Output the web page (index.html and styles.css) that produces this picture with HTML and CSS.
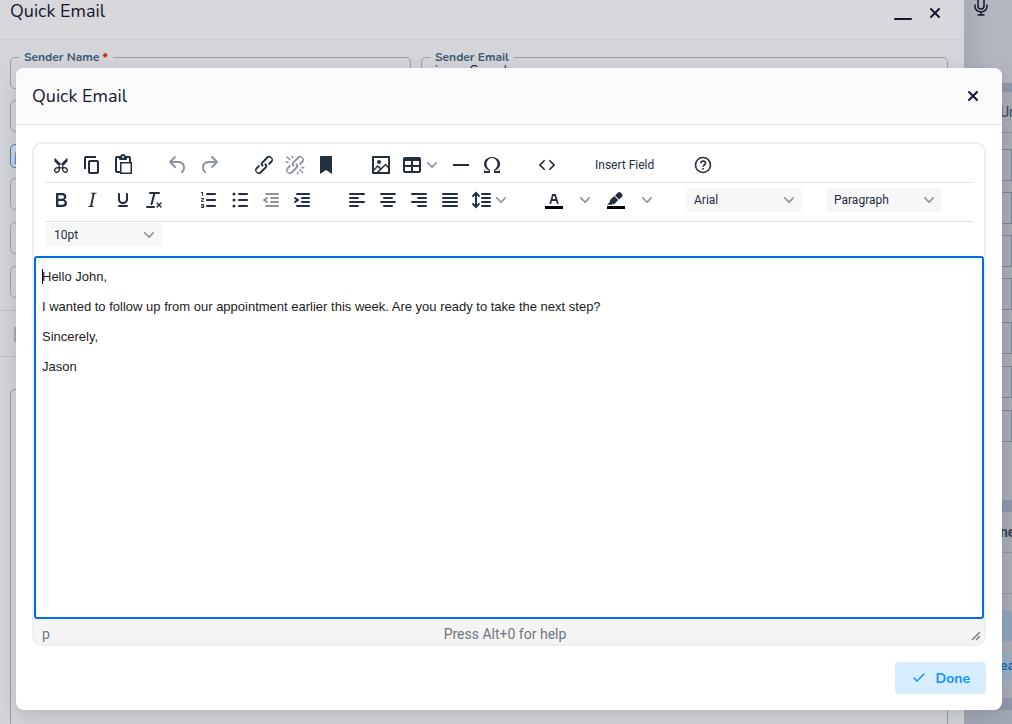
FILE: index.html
```html
<!DOCTYPE html>
<html lang="en">
<head>
  <meta charset="UTF-8" />
  <meta name="viewport" content="width=device-width, initial-scale=1.0" />
  <title>Quick Email</title>
  <link rel="stylesheet" href="styles.css">
</head>
<body>
  <!-- Page behind the dialog -->
  <div class="app">
    <main class="panel">
      <header class="panel-header">
        <h1 class="title">Quick Email</h1>
        <div class="window-actions">
          <button class="icon-btn" aria-label="Minimize"><svg width="18" height="18" viewBox="0 0 18 18"><path d="M1 15h16" fill="none" stroke="currentColor" stroke-width="2" stroke-linecap="round"/></svg></button>
          <button class="icon-btn" aria-label="Close panel"><svg width="12" height="12" viewBox="0 0 12 12"><path d="m2 2 8 8M10 2l-8 8" fill="none" stroke="currentColor" stroke-width="2" stroke-linecap="round"/></svg></button>
        </div>
      </header>
      <div class="sender-row">
        <fieldset class="field sender-name">
          <legend><label for="senderName">Sender Name <b class="required">*</b></label></legend>
          <input id="senderName" type="text">
        </fieldset>
        <fieldset class="field sender-email">
          <legend><label for="senderEmail">Sender Email</label></legend>
          <input id="senderEmail" type="text" value="jason Cornel">
        </fieldset>
      </div>
      <div class="panel-fields">
        <input class="line-field" type="text" aria-label="Recipient">
        <input class="line-field chip" type="text" aria-label="To" value="j">
        <input class="line-field" type="text" aria-label="Cc">
        <input class="line-field" type="text" aria-label="Bcc">
        <input class="line-field" type="text" aria-label="Subject">
      </div>
      <div class="panel-tools"><span class="tool-block"></span></div>
      <textarea class="message-box" aria-label="Message"></textarea>
    </main>
    <aside class="side">
      <div class="side-top">
        <svg width="16" height="20" viewBox="0 0 16 20"><g fill="none" stroke="currentColor" stroke-width="1.5" stroke-linecap="round"><rect x="5" y="-4" width="6" height="13" rx="3"/><path d="M2 5v1.5a6 5.5 0 0 0 12 0V5M8 12v3M5 15h6"/></g></svg>
      </div>
      <div class="side-card">
        <div class="side-heading">Un</div>
        <div class="side-list">
          <span class="side-slot"></span>
          <span class="side-slot"></span>
          <span class="side-slot"></span>
          <span class="side-slot"></span>
          <span class="side-slot"></span>
          <span class="side-slot"></span>
          <span class="side-slot"></span>
        </div>
      </div>
      <div class="side-card side-card-small">
        <div class="side-heading side-heading-bold">ne</div>
        <div class="side-gap"></div>
        <div class="side-action"></div>
        <div class="side-action side-action-light">ea</div>
      </div>
      <div class="side-foot"></div>
    </aside>
  </div>

  <section class="modal" role="dialog" aria-labelledby="modalTitle">
    <header class="modal-header">
      <h2 class="title" id="modalTitle">Quick Email</h2>
      <button class="icon-btn" aria-label="Close"><svg width="12" height="12" viewBox="0 0 12 12"><path d="m2 2 8 8M10 2l-8 8" fill="none" stroke="currentColor" stroke-width="2" stroke-linecap="round"/></svg></button>
    </header>

    <div class="modal-body">
      <div class="editor">
        <div class="toolbar" role="toolbar">
          <div class="toolbar-row">
            <div class="group">
              <button class="tool" aria-label="Cut"><svg class="icon"><path fill-rule="evenodd" d="M18 15c.6.7 1 1.4 1 2.3 0 .8-.2 1.500-.7 2l-.8.5-1 .2c-.4 0-.8 0-1.2-.3a3.9 3.9 0 0 1-2.1-2.2c-.2-.5-.3-1-.2-1.5l-1-1-1 1c0 .5 0 1-.2 1.5-.1.5-.4 1-.9 1.4-.3.4-.7.6-1.2.8l-1.2.3c-.4 0-.7 0-1-.2-.3 0-.6-.3-.8-.5-.5-.5-.8-1.2-.7-2 0-.9.4-1.6 1-2.2A3.7 3.7 0 0 1 8.6 14H9l1-1-4-4-.5-1a3.3 3.3 0 0 1 0-2c0-.4.3-.7.5-1l6 6 6-6 .5 1a3.3 3.3 0 0 1 0 2c0 .4-.3.7-.5 1l-4 4 1 1h.5c.4 0 .8 0 1.2.3.5.2.9.4 1.2.8Zm-8.5 2.2.1-.4v-.7a1 1 0 0 0-.2-.5 1 1 0 0 0-.4-.2 1.6 1.6 0 0 0-.8 0 2.6 2.6 0 0 0-.8.3 2.5 2.5 0 0 0-.9 1.1l-.1.4v.7l.2.5.5.2h.7a2.5 2.5 0 0 0 .8-.3 2.8 2.8 0 0 0 .9-1.1Zm2.5-2.8c.4 0 .7-.1 1-.4.3-.3.4-.6.4-1s-.1-.7-.4-1c-.3-.3-.6-.4-1-.4s-.7.1-1 .4c-.3.3-.4.6-.4 1s.1.7.4 1c.3.3.6.4 1 .4Zm5.4 4 .2-.5v-.7a2.6 2.6 0 0 0-.3-.8 2.4 2.4 0 0 0-.7-.7 2.5 2.5 0 0 0-.8-.3 1.5 1.5 0 0 0-.8 0 1 1 0 0 0-.4.2 1 1 0 0 0-.2.5v1.1l.3.4.3.4a2.8 2.8 0 0 0 .8.5l.4.1h.7l.5-.2Z"/></svg></button>
              <button class="tool" aria-label="Copy"><svg class="icon"><path d="M16 3H6a2 2 0 0 0-2 2v11h2V5h10V3Zm1 4a2 2 0 0 1 2 2v10a2 2 0 0 1-2 2h-7a2 2 0 0 1-2-2V9c0-1.2.9-2 2-2h7Zm0 12V9h-7v10h7Z"/></svg></button>
              <button class="tool" aria-label="Paste"><svg class="icon"><path fill-rule="evenodd" d="M18 9V5h-2v1c0 .6-.4 1-1 1H9a1 1 0 0 1-1-1V5H6v13h3v2H6a2 2 0 0 1-2-2V5c0-1.1.9-2 2-2h3.2A3 3 0 0 1 12 1a3 3 0 0 1 2.800 2H18a2 2 0 0 1 2 2v4h1v12H9V9h9Zm1.500 1.500h-9v9h9v-9ZM12 3a1 1 0 1 0 0 2 1 1 0 0 0 0-2Z"/></svg></button>
            </div>
            <div class="group">
              <button class="tool" disabled aria-label="Undo"><svg class="icon"><path d="M6.4 8H12c3.7 0 6.2 2 6.8 5.1.6 2.7-.4 5.6-2.3 6.8a1 1 0 0 1-1-1.800c1.1-.6 1.8-2.7 1.4-4.6-.5-2.1-2.1-3.5-4.9-3.5H6.400l3.300 3.300a1 1 0 1 1-1.4 1.4l-5-5a1 1 0 0 1 0-1.4l5-5a1 1 0 0 1 1.4 1.4L6.400 8Z"/></svg></button>
              <button class="tool" disabled aria-label="Redo"><svg class="icon"><path d="M17.6 10H12c-2.8 0-4.4 1.4-4.9 3.5-.4 2 .3 4 1.4 4.6a1 1 0 1 1-1 1.8c-2-1.2-2.9-4.1-2.3-6.8.6-3 3-5.1 6.8-5.1h5.6l-3.3-3.3a1 1 0 1 1 1.4-1.4l5 5a1 1 0 0 1 0 1.4l-5 5a1 1 0 0 1-1.4-1.4l3.3-3.3Z"/></svg></button>
            </div>
            <div class="group">
              <button class="tool" aria-label="Link"><svg class="icon"><path d="M6.2 12.3a1 1 0 0 1 1.4 1.4l-2 2a2 2 0 1 0 2.6 2.8l4.8-4.8a1 1 0 0 0 0-1.4 1 1 0 1 1 1.4-1.3 2.9 2.9 0 0 1 0 4L9.6 20a3.9 3.9 0 0 1-5.5-5.5l2-2Zm11.6-.6a1 1 0 0 1-1.4-1.4l2-2a2 2 0 1 0-2.6-2.8L11 10.3a1 1 0 0 0 0 1.4A1 1 0 1 1 9.6 13a2.9 2.9 0 0 1 0-4L14.4 4a3.9 3.9 0 0 1 5.5 5.5l-2 2Z"/></svg></button>
              <button class="tool" disabled aria-label="Remove link"><svg class="icon"><path d="M6.2 12.3a1 1 0 0 1 1.4 1.4l-2 2a2 2 0 1 0 2.6 2.8l4.8-4.8a1 1 0 0 0 0-1.4 1 1 0 1 1 1.4-1.3 2.9 2.9 0 0 1 0 4L9.6 20a3.9 3.9 0 0 1-5.5-5.5l2-2Zm11.6-.6a1 1 0 0 1-1.4-1.4l2-2a2 2 0 1 0-2.6-2.8L11 10.3a1 1 0 0 0 0 1.4A1 1 0 1 1 9.6 13a2.9 2.9 0 0 1 0-4L14.4 4a3.9 3.9 0 0 1 5.5 5.5l-2 2ZM7.6 6.3a.8.8 0 0 1-1 1.1L3.3 4.2a.7.7 0 1 1 1-1l3.2 3.1ZM5.1 8.6a.8.8 0 0 1 0 1.5H3a.8.8 0 0 1 0-1.5h2Zm5-3.5a.8.8 0 0 1-1.5 0V3a.8.8 0 0 1 1.5 0v2Zm6 11.800a.8.8 0 0 1 1-1l3.2 3.2a.8.8 0 0 1-1 1L16 17Zm-2.200 2a.8.8 0 0 1 1.5 0V21a.8.8 0 0 1-1.5 0v-2Zm5-3.5a.7.7 0 1 1 0-1.5H21a.8.8 0 0 1 0 1.5h-2Z"/></svg></button>
              <button class="tool" aria-label="Anchor"><svg class="icon"><path d="M6 4v17l6-4 6 4V4c0-.6-.4-1-1-1H7a1 1 0 0 0-1 1Z"/></svg></button>
            </div>
            <div class="group">
              <button class="tool" aria-label="Image"><svg class="icon"><path fill-rule="evenodd" d="m5 15.7 3.3-3.2c.3-.3.7-.3 1 0L12 15l4.1-4c.3-.4.8-.4 1 0l2 1.9V5H5v10.7ZM5 18v1h3l2.800-2.900-2-2L5 17.900Zm14-3-2.500-2.400-6.400 6.500H19v-4ZM4 3h16c.6 0 1 .4 1 1v16c0 .6-.4 1-1 1H4a1 1 0 0 1-1-1V4c0-.6.4-1 1-1Zm6 8a2 2 0 1 0 0-4 2 2 0 0 0 0 4Z"/></svg></button>
              <button class="tool tool-menu" aria-label="Table"><svg class="icon"><path fill-rule="evenodd" d="M19 4a2 2 0 0 1 2 2v12a2 2 0 0 1-2 2H5a2 2 0 0 1-2-2V6c0-1.1.9-2 2-2h14ZM5 14v4h6v-4H5Zm14 0h-6v4h6v-4Zm0-6h-6v4h6V8ZM5 12h6V8H5v4Z"/></svg><svg class="chevron"><path d="M8.7 2.2c.3-.3.8-.3 1 0 .4.4.4.9 0 1.2L5.7 7.8c-.3.3-.9.3-1.2 0L.2 3.4a.8.8 0 0 1 0-1.2c.3-.3.8-.3 1.1 0L5 6l3.700-3.800Z"/></svg></button>
              <button class="tool" aria-label="Horizontal line"><svg class="icon"><path d="M4 11h16v2H4z"/></svg></button>
              <button class="tool" aria-label="Special character"><svg class="icon"><path d="M15 18h4l1-2v4h-6v-3.3l1.4-1a6 6 0 0 0 1.8-2.9 6.3 6.3 0 0 0-.1-4.1 5.8 5.8 0 0 0-3-3.2c-.6-.3-1.3-.5-2.1-.5a5.1 5.1 0 0 0-3.9 1.8 6.3 6.3 0 0 0-1.3 6 6.2 6.2 0 0 0 1.8 3l1.4.9V20H4v-4l1 2h4v-.5l-2-1L5.4 15A6.5 6.5 0 0 1 4 11c0-1 .2-1.9.6-2.7A7 7 0 0 1 6.3 6C7.1 5.4 8 5 9 4.5c1-.3 2-.5 3.1-.5a8.8 8.8 0 0 1 5.7 2 7 7 0 0 1 1.700 2.300 6 6 0 0 1 .2 4.800c-.2.7-.6 1.300-1 1.900a7.600 7.600 0 0 1-3.600 2.500v1.500Z"/></svg></button>
            </div>
            <div class="group">
              <button class="tool" aria-label="Source code"><svg class="icon"><path d="M9.8 15.7c.3.3.3.8 0 1-.3.4-.9.4-1.2 0l-4.4-4.1a.8.8 0 0 1 0-1.2l4.4-4.2c.3-.3.9-.3 1.2 0 .3.3.3.8 0 1.1L6 12l3.8 3.7ZM14.2 15.7c-.3.3-.3.8 0 1 .4.4.9.4 1.2 0l4.4-4.1c.3-.3.3-.9 0-1.2l-4.4-4.2a.8.8 0 0 0-1.2 0c-.3.3-.3.8 0 1.1L18 12l-3.8 3.7Z"/></svg></button>
            </div>
            <div class="group">
              <button class="tool tool-text">Insert Field</button>
            </div>
            <div class="group">
              <button class="tool" aria-label="Help"><svg class="icon"><g fill="none" stroke="currentColor" stroke-width="1.6"><circle cx="12" cy="12" r="7.5"/><path d="M9.7 10.2c0-2.9 4.8-2.7 4.8 0 0 1.7-2.4 1.7-2.4 3.6"/></g><path d="M11.2 15h1.7v1.6h-1.7z"/></svg></button>
            </div>
          </div>

          <div class="toolbar-row toolbar-row-format">
            <div class="group">
              <button class="tool" aria-label="Bold"><svg class="icon"><path fill-rule="evenodd" d="M7.8 19c-.3 0-.5 0-.6-.2l-.2-.5V5.7c0-.2 0-.4.2-.5l.6-.2h5c1.5 0 2.7.3 3.5 1 .7.6 1.1 1.4 1.1 2.5a3 3 0 0 1-.6 1.9c-.4.6-1 1-1.6 1.2.4.1.9.3 1.3.6s.8.7 1 1.2c.4.4.5 1 .5 1.6 0 1.3-.4 2.3-1.3 3-.8.7-2.1 1-3.8 1H7.8Zm5-8.3c.6 0 1.2-.1 1.6-.5.4-.3.6-.7.6-1.3 0-1.1-.8-1.7-2.3-1.7H9.3v3.5h3.4Zm.5 6c.7 0 1.3-.1 1.7-.4.4-.4.6-.9.6-1.5s-.2-1-.7-1.4c-.4-.3-1-.4-2-.4H9.4v3.8h4Z"/></svg></button>
              <button class="tool" aria-label="Italic"><svg class="icon"><path d="m16.7 4.7-.1.9h-.3c-.6 0-1 0-1.4.3-.3.3-.4.6-.5 1.1l-2.1 9.8v.6c0 .5.4.8 1.4.8h.2l-.2.8H8l.2-.8h.2c1.1 0 1.8-.5 2-1.5l2-9.8.1-.5c0-.6-.4-.8-1.4-.8h-.3l.2-.9h5.8Z"/></svg></button>
              <button class="tool" aria-label="Underline"><svg class="icon"><path d="M16 5c.6 0 1 .4 1 1v5.5a4 4 0 0 1-.4 1.8l-1 1.4a5.3 5.3 0 0 1-5.5 1 5 5 0 0 1-1.6-1c-.5-.4-.8-.9-1.1-1.4a4 4 0 0 1-.4-1.800V6c0-.6.4-1 1-1s1 .4 1 1v5.5c0 .3 0 .6.2 1l.6.7a3.3 3.3 0 0 0 2.2.8 3.4 3.4 0 0 0 2.2-.8c.3-.2.4-.5.6-.8l.2-.9V6c0-.6.4-1 1-1ZM8 17h8c.6 0 1 .4 1 1s-.4 1-1 1H8a1 1 0 0 1 0-2Z"/></svg></button>
              <button class="tool" aria-label="Clear formatting"><svg class="icon"><path d="M13.2 6v.2l-2.6 10a1 1 0 0 1-1 .8h-.2a.8.8 0 0 1-.8-1l2.6-10H8a1 1 0 1 1 0-2h9a1 1 0 0 1 0 2h-3.8ZM5 18h7a1 1 0 0 1 0 2H5a1 1 0 0 1 0-2Zm13.5 1.5L17 18l-1.5 1.5a.7.7 0 0 1-1-1L16 17l-1.5-1.5a.7.7 0 0 1 1-1L17 16l1.5-1.5a.7.7 0 0 1 1 1L18 17l1.500 1.500a.7.7 0 0 1-1 1Z"/></svg></button>
            </div>
            <div class="group">
              <button class="tool" aria-label="Numbered list"><svg class="icon"><path d="M10 17h8c.6 0 1 .4 1 1s-.4 1-1 1h-8a1 1 0 0 1 0-2Zm0-6h8c.6 0 1 .4 1 1s-.4 1-1 1h-8a1 1 0 0 1 0-2Zm0-6h8c.6 0 1 .4 1 1s-.4 1-1 1h-8a1 1 0 1 1 0-2ZM6 4v3.5c0 .3-.2.5-.5.5a.5.5 0 0 1-.5-.5V5h-.5a.5.5 0 0 1 0-1H6Zm-1 8.800.2.2h1.300c.3 0 .5.2.5.5s-.2.5-.5.5H4.900a1 1 0 0 1-.9-1c0-.4.3-.8.6-1l1.200-.4.2-.3a.2.2 0 0 0-.2-.2H4.500a.5.5 0 0 1-.5-.5c0-.3.2-.5.5-.5h1.600c.5 0 .9.4.9 1 0 .4-.3.8-.6 1l-1.200.4-.2.3ZM7 17v2c0 .6-.4 1-1 1H4.500a.5.5 0 0 1 0-1h1.200c.2 0 .3-.1.3-.3 0-.2-.1-.3-.3-.3H4.400a.4.4 0 1 1 0-.8h1.300c.2 0 .3-.1.3-.3 0-.2-.1-.3-.3-.3H4.500a.5.5 0 1 1 0-1H6c.6 0 1 .4 1 1Z"/></svg></button>
              <button class="tool" aria-label="Bullet list"><svg class="icon"><path d="M11 5h8c.6 0 1 .4 1 1s-.4 1-1 1h-8a1 1 0 0 1 0-2Zm0 6h8c.6 0 1 .4 1 1s-.4 1-1 1h-8a1 1 0 0 1 0-2Zm0 6h8c.6 0 1 .4 1 1s-.4 1-1 1h-8a1 1 0 0 1 0-2ZM4.5 6a1.5 1.5 0 1 0 3 0 1.5 1.5 0 0 0-3 0Zm0 6a1.5 1.5 0 1 0 3 0 1.5 1.5 0 0 0-3 0Zm0 6a1.5 1.5 0 1 0 3 0 1.5 1.5 0 0 0-3 0Z"/></svg></button>
              <button class="tool" disabled aria-label="Decrease indent"><svg class="icon"><path d="M7 5h12c.6 0 1 .4 1 1s-.4 1-1 1H7a1 1 0 1 1 0-2Zm5 4h7c.6 0 1 .4 1 1s-.4 1-1 1h-7a1 1 0 0 1 0-2Zm0 4h7c.6 0 1 .4 1 1s-.4 1-1 1h-7a1 1 0 0 1 0-2Zm-5 4h12a1 1 0 0 1 0 2H7a1 1 0 0 1 0-2Zm1.6-3.8a1 1 0 0 1-1.2 1.6l-3-2a1 1 0 0 1 0-1.6l3-2a1 1 0 0 1 1.2 1.6L6.8 12l1.8 1.2Z"/></svg></button>
              <button class="tool" aria-label="Increase indent"><svg class="icon"><path d="M7 5h12c.6 0 1 .4 1 1s-.4 1-1 1H7a1 1 0 1 1 0-2Zm5 4h7c.6 0 1 .4 1 1s-.4 1-1 1h-7a1 1 0 0 1 0-2Zm0 4h7c.6 0 1 .4 1 1s-.4 1-1 1h-7a1 1 0 0 1 0-2Zm-5 4h12a1 1 0 0 1 0 2H7a1 1 0 0 1 0-2Zm-2.6-3.8L6.2 12l-1.8-1.2a1 1 0 0 1 1.2-1.6l3 2a1 1 0 0 1 0 1.6l-3 2a1 1 0 1 1-1.2-1.6Z"/></svg></button>
            </div>
            <div class="group">
              <button class="tool" aria-label="Align left"><svg class="icon"><path d="M5 5h14a1 1 0 0 1 0 2H5a1 1 0 1 1 0-2Zm0 4h8a1 1 0 0 1 0 2H5a1 1 0 1 1 0-2Zm0 8h8a1 1 0 0 1 0 2H5a1 1 0 0 1 0-2Zm0-4h14a1 1 0 0 1 0 2H5a1 1 0 0 1 0-2Z"/></svg></button>
              <button class="tool" aria-label="Align center"><svg class="icon"><path d="M5 5h14a1 1 0 0 1 0 2H5a1 1 0 1 1 0-2Zm3 4h8a1 1 0 0 1 0 2H8a1 1 0 1 1 0-2Zm0 8h8a1 1 0 0 1 0 2H8a1 1 0 0 1 0-2Zm-3-4h14a1 1 0 0 1 0 2H5a1 1 0 0 1 0-2Z"/></svg></button>
              <button class="tool" aria-label="Align right"><svg class="icon"><path d="M5 5h14a1 1 0 0 1 0 2H5a1 1 0 1 1 0-2Zm6 4h8a1 1 0 0 1 0 2h-8a1 1 0 0 1 0-2Zm0 8h8a1 1 0 0 1 0 2h-8a1 1 0 0 1 0-2Zm-6-4h14a1 1 0 0 1 0 2H5a1 1 0 0 1 0-2Z"/></svg></button>
              <button class="tool" aria-label="Justify"><svg class="icon"><path d="M5 5h14a1 1 0 0 1 0 2H5a1 1 0 1 1 0-2Zm0 4h14a1 1 0 0 1 0 2H5a1 1 0 1 1 0-2Zm0 4h14a1 1 0 0 1 0 2H5a1 1 0 0 1 0-2Zm0 4h14a1 1 0 0 1 0 2H5a1 1 0 0 1 0-2Z"/></svg></button>
              <button class="tool tool-menu" aria-label="Line height"><svg class="icon"><path d="M21 5a1 1 0 0 1 0 2h-8a1 1 0 0 1 0-2h8Zm0 4a1 1 0 0 1 0 2h-8a1 1 0 0 1 0-2h8Zm0 4a1 1 0 0 1 0 2h-8a1 1 0 0 1 0-2h8Zm0 4a1 1 0 0 1 0 2h-8a1 1 0 0 1 0-2h8ZM7 3.6l3.7 3.7a1 1 0 0 1-1.3 1.5h-.1L8 7.3v9.2l1.3-1.3a1 1 0 0 1 1.3 0h.1c.4.4.4 1 0 1.3v.1L7 20.4l-3.7-3.7a1 1 0 0 1 1.3-1.5h.1L6 16.7V7.4L4.7 8.7a1 1 0 0 1-1.3 0h-.1a1 1 0 0 1 0-1.3v-.1L7 3.6Z"/></svg><svg class="chevron"><path d="M8.7 2.2c.3-.3.8-.3 1 0 .4.4.4.9 0 1.2L5.7 7.8c-.3.3-.9.3-1.2 0L.2 3.4a.8.8 0 0 1 0-1.2c.3-.3.8-.3 1.1 0L5 6l3.7-3.8Z"/></svg></button>
            </div>
            <div class="group">
              <button class="tool" aria-label="Text color"><svg class="icon"><path fill="#000" d="M3 18h18v3H3z"/><path fill-rule="evenodd" d="M8.7 16h-.8a.5.5 0 0 1-.5-.6l2.7-9c.1-.3.3-.4.5-.4h2.8c.2 0 .4.1.5.4l2.7 9a.5.5 0 0 1-.5.6h-.8a.5.5 0 0 1-.4-.4l-.7-2.2c0-.3-.3-.4-.5-.4h-3.4c-.2 0-.4.1-.5.4l-.7 2.2c0 .3-.2.4-.4.4Zm2.6-7.6-.6 2a.5.5 0 0 0 .5.6h1.6a.5.5 0 0 0 .5-.6l-.6-2c0-.3-.3-.4-.5-.4h-.4c-.2 0-.4.1-.5.4Z"/></svg></button>
              <button class="tool" aria-label="Text color menu"><svg class="chevron"><path d="M8.7 2.2c.3-.3.8-.3 1 0 .4.4.4.9 0 1.2L5.7 7.8c-.3.3-.9.3-1.2 0L.2 3.4a.8.8 0 0 1 0-1.2c.3-.3.8-.3 1.1 0L5 6l3.7-3.8Z"/></svg></button>
              <button class="tool" aria-label="Highlight color"><svg class="icon"><path fill="#000" d="M3 18h18v3H3z"/><path d="M7.7 16.7H3l3.3-3.3-.7-.8L10.2 8l4 4.1-4 4.2c-.2.2-.6.2-.8 0l-.6-.7-1.1 1.1Zm5-7.5L11 7.4l3-2.9a2 2 0 0 1 2.6 0L18 6c.7.7.7 2 0 2.7l-2.9 2.9-1.8-1.8-.5-.6Z"/></svg></button>
              <button class="tool" aria-label="Highlight color menu"><svg class="chevron"><path d="M8.7 2.2c.3-.3.8-.3 1 0 .4.4.4.9 0 1.2L5.7 7.8c-.3.3-.9.3-1.2 0L.2 3.4a.8.8 0 0 1 0-1.2c.3-.3.8-.3 1.1 0L5 6l3.7-3.8Z"/></svg></button>
            </div>
            <div class="select-wrap">
              <select class="select" aria-label="Font family"><option>Arial</option></select>
              <svg class="chevron"><path d="M8.7 2.2c.3-.3.8-.3 1 0 .4.4.4.9 0 1.2L5.7 7.8c-.3.3-.9.3-1.2 0L.2 3.4a.8.8 0 0 1 0-1.2c.3-.3.8-.3 1.1 0L5 6l3.7-3.8Z"/></svg>
            </div>
            <div class="select-wrap">
              <select class="select" aria-label="Block format"><option>Paragraph</option></select>
              <svg class="chevron"><path d="M8.7 2.2c.3-.3.8-.3 1 0 .4.4.4.9 0 1.2L5.7 7.8c-.3.3-.9.3-1.2 0L.2 3.4a.8.8 0 0 1 0-1.2c.3-.3.8-.3 1.1 0L5 6l3.7-3.8Z"/></svg>
            </div>
          </div>

          <div class="toolbar-row toolbar-row-size">
            <div class="select-wrap">
              <select class="select" aria-label="Font size"><option>10pt</option></select>
              <svg class="chevron"><path d="M8.7 2.2c.3-.3.8-.3 1 0 .4.4.4.9 0 1.2L5.7 7.8c-.3.3-.9.3-1.2 0L.2 3.4a.8.8 0 0 1 0-1.2c.3-.3.8-.3 1.1 0L5 6l3.7-3.8Z"/></svg>
            </div>
          </div>
        </div>

        <div class="edit-area" contenteditable="true" role="textbox" aria-multiline="true" aria-label="Message body">
          <p><span class="caret"></span>Hello John,</p>
          <p>I wanted to follow up from our appointment earlier this week. Are you ready to take the next step?</p>
          <p>Sincerely,</p>
          <p>Jason</p>
        </div>

        <div class="statusbar">
          <span class="path">p</span>
          <span class="hint">Press Alt+0 for help</span>
          <svg class="resize" width="10" height="10" viewBox="0 0 10 10"><path d="M8.1 1.1A.5.5 0 1 1 9 2L2 9A.5.5 0 1 1 1 8l7-7ZM8.1 5.1A.5.5 0 1 1 9 6L6 9A.5.5 0 1 1 5 8l3-3Z"/></svg>
        </div>
      </div>
    </div>

    <footer class="modal-footer">
      <button class="done">
        <svg width="12" height="10" viewBox="0 0 12 10"><path d="m1 5 3 3 7-7" fill="none" stroke="currentColor" stroke-width="1.5" stroke-linecap="round" stroke-linejoin="round"/></svg>
        Done
      </button>
    </footer>
  </section>

  <script>
    // Toolbar icons are all drawn on the same 24px grid, chevrons on a 10px one
    for (const icon of document.querySelectorAll(".icon")) {
      icon.setAttribute("viewBox", "0 0 24 24");
    }
    for (const chevron of document.querySelectorAll(".chevron")) {
      chevron.setAttribute("viewBox", "0 0 10 10");
    }
  </script>
</body>
</html>
```

FILE: styles.css
```css
:root {
  --ink: #222f3e;
  --title: #15172e;
  --muted: #8d949d;
  --accent: #006ce7;
  --done: #1492ff;
  --done-bg: #d6ecff;
  --field-border: #98a2ae;
  --ui: Nunito, Lato, "Open Sans", sans-serif;
  --toolbar: Roboto, "Noto Sans", sans-serif;
}
* {
  padding: 0;
  margin: 0;
  box-sizing: border-box;
}
body {
  height: 100vh;
  position: relative;
  overflow: hidden;
  font-family: var(--ui);
  color: var(--title);
}
button {
  border: none;
  background: none;
  color: inherit;
  font: inherit;
  cursor: pointer;
}
svg {
  display: block;
  fill: currentColor;
}
.title {
  font-size: 18px;
  line-height: 22px;
  font-weight: 400;
}
.icon-btn {
  display: flex;
}

/* Page behind the dialog */
.app {
  display: flex;
  height: 100%;
  overflow: hidden;
}
.panel {
  flex: 1;
  min-width: 0;
  display: flex;
  flex-direction: column;
  background: #d4d5d9;
}
.panel-header {
  display: flex;
  justify-content: space-between;
  align-items: flex-start;
  height: 40px;
  padding: 0 23px 0 10px;
  background: #d7d8dc;
  border-bottom: 1px solid #cbccd2;
}
.window-actions {
  display: flex;
  align-items: center;
  gap: 17px;
  padding-top: 4px;
}
.sender-row {
  display: flex;
  gap: 10px;
  padding: 11px 16px 0 10px;
}
.field {
  flex-basis: 0;
  min-width: 0;
  height: 38px;
  border: 1px solid var(--field-border);
  border-radius: 5px;
  padding: 0 13px;
}
.sender-name { flex-grow: 400; }
.sender-email { flex-grow: 535; }
.field legend {
  margin-left: -5px;
  padding: 0 5px;
  font-size: 12px;
  line-height: 12px;
  font-weight: 700;
  color: #3d5c77;
}
.field input {
  display: block;
  width: 100%;
  border: none;
  background: none;
  font: 13px/16px var(--ui);
  color: var(--title);
}
.required { color: #c9252d; }
.panel-fields {
  display: flex;
  flex-direction: column;
  gap: 12px;
  padding: 11px 16px 12px 10px;
}
.line-field {
  height: 32px;
  border: 1px solid var(--field-border);
  border-radius: 5px;
  padding: 0 3px;
  background: none;
}
.chip {
  width: 60px;
  height: 24px;
  margin-bottom: -2px;
  border-color: #1f86dd;
  color: #1f86dd;
}
.panel-tools {
  height: 47px;
  padding: 16px 14px;
  border-top: 1px solid #c0c2c8;
  border-bottom: 1px solid #c0c2c8;
}
.tool-block {
  display: block;
  width: 16px;
  height: 15px;
  background: #a8a9ae;
}
.message-box {
  flex: 1;
  margin: 32px 16px -8px 10px;
  border: 1px solid #9a9ca2;
  border-radius: 5px;
  background: none;
  resize: none;
}
.side {
  flex: 0 0 48px;
  min-width: 0;
  overflow: hidden;
  background: #9197ab;
  color: #3b4152;
}
.side-top {
  height: 83px;
  margin-bottom: 9px;
  padding-left: 9px;
  color: var(--title);
  background: linear-gradient(90deg, #a6abb3, #b3b5c0 50%);
}
.side-card {
  height: 408px;
  background: #a8acb5;
}
.side-heading {
  height: 41px;
  padding-left: 36px;
  border-bottom: 1px solid #8f95a3;
  font: 14px/41px var(--toolbar);
}
.side-list {
  display: flex;
  flex-direction: column;
  gap: 11px;
  padding-top: 16px;
}
.side-slot {
  height: 32px;
  border: 1px solid #7d8494;
}
.side-slot:nth-child(n+5) {
  margin-top: 1px;
}
.side-card-small {
  height: 186px;
  margin-top: 12px;
}
.side-heading-bold {
  font-weight: 700;
}
.side-gap {
  height: 41px;
  margin-bottom: 16px;
  border-bottom: 1px solid #8f95a3;
}
.side-action {
  height: 32px;
  margin-bottom: 8px;
  padding-left: 36px;
  border-radius: 5px;
  background: #90a5ba;
  color: #1465b4;
  font-size: 14px;
  line-height: 32px;
  font-weight: 700;
}
.side-action-light {
  background: #9aaebf;
}
.side-foot {
  height: 14px;
  margin-top: 12px;
  background: #a3a8b5;
}

/* Dialog */
.modal {
  position: absolute;
  top: 68px;
  right: 10px;
  bottom: 14px;
  left: 16px;
  display: flex;
  flex-direction: column;
  background: #fff;
  border-radius: 8px;
  box-shadow: 0 6px 20px rgba(50, 65, 80, 0.2);
}
.modal-header {
  display: flex;
  justify-content: space-between;
  align-items: center;
  height: 57px;
  padding: 0 23px 0 16px;
  background: #fbfbfc;
  border-bottom: 1px solid #e2e5ee;
  border-radius: 8px 8px 0 0;
}
.modal-body {
  flex: 1;
  display: flex;
  padding: 17px 16px 16px;
}
.editor {
  flex: 1;
  display: flex;
  flex-direction: column;
  border: 2px solid #eee;
  border-radius: 10px;
  overflow: hidden;
}
.toolbar {
  padding: 4px 11px 0;
  color: var(--ink);
  font-family: var(--toolbar);
}
.toolbar-row {
  display: flex;
  gap: 24px;
  border-bottom: 1px solid #dfe1e3;
}
.toolbar-row-format {
  padding-bottom: 4px;
  align-items: center;
}
.toolbar-row-size {
  padding: 1px 1px 9px;
  border-bottom: none;
}
.group {
  display: flex;
}
.tool {
  display: flex;
  align-items: center;
  justify-content: center;
  width: 31px;
  height: 34px;
}
.tool:disabled {
  color: var(--muted);
}
.tool-menu {
  justify-content: flex-start;
  width: 49px;
  gap: 3px;
  padding-left: 4px;
}
.tool-text {
  width: auto;
  padding: 0 9px;
  font-size: 12px;
}
.icon {
  width: 24px;
  height: 24px;
  flex: none;
}
.chevron {
  width: 10px;
  height: 10px;
  flex: none;
  color: var(--muted);
}
.select-wrap {
  display: grid;
  grid-template-columns: 1fr 18px;
  align-items: center;
  width: 116px;
  height: 24px;
  background: #f7f7f7;
  border-radius: 3px;
}
.select {
  grid-area: 1 / 1 / 2 / 3;
  height: 24px;
  padding: 0 8px;
  border: none;
  background: none;
  appearance: none;
  color: var(--ink);
  font: 12px/24px var(--toolbar);
}
.select-wrap .chevron {
  grid-area: 1 / 2 / 2 / 3;
  pointer-events: none;
}
.edit-area {
  flex: 1;
  padding: 11px 6px;
  border: 2px solid var(--accent);
  border-radius: 3px;
  outline: none;
  color: #1c1c1c;
  font: 13px/15px "Liberation Sans", Arial, sans-serif;
  box-shadow: inset 0 6px 6px -5px rgba(0, 0, 0, 0.07);
}
.edit-area p {
  margin-bottom: 15px;
}
.caret {
  display: inline-block;
  width: 1px;
  height: 15px;
  margin-right: -1px;
  background: #000;
  vertical-align: top;
}
.statusbar {
  display: grid;
  grid-template-columns: 1fr auto 1fr 13px;
  align-items: center;
  height: 25px;
  padding: 4px 3px 0 8px;
  background: #f4f4f4;
  color: #6f7780;
  font: 14px/20px var(--toolbar);
}
.resize {
  grid-column: 4;
  justify-self: end;
  align-self: end;
  margin-bottom: 3px;
}
.modal-footer {
  display: flex;
  justify-content: flex-end;
  padding: 0 16px 16px;
}
.done {
  display: flex;
  align-items: center;
  gap: 10px;
  height: 32px;
  padding: 0 16px 0 18px;
  border-radius: 4px;
  background: var(--done-bg);
  color: var(--done);
  font-size: 14px;
  font-weight: 700;
}
```
